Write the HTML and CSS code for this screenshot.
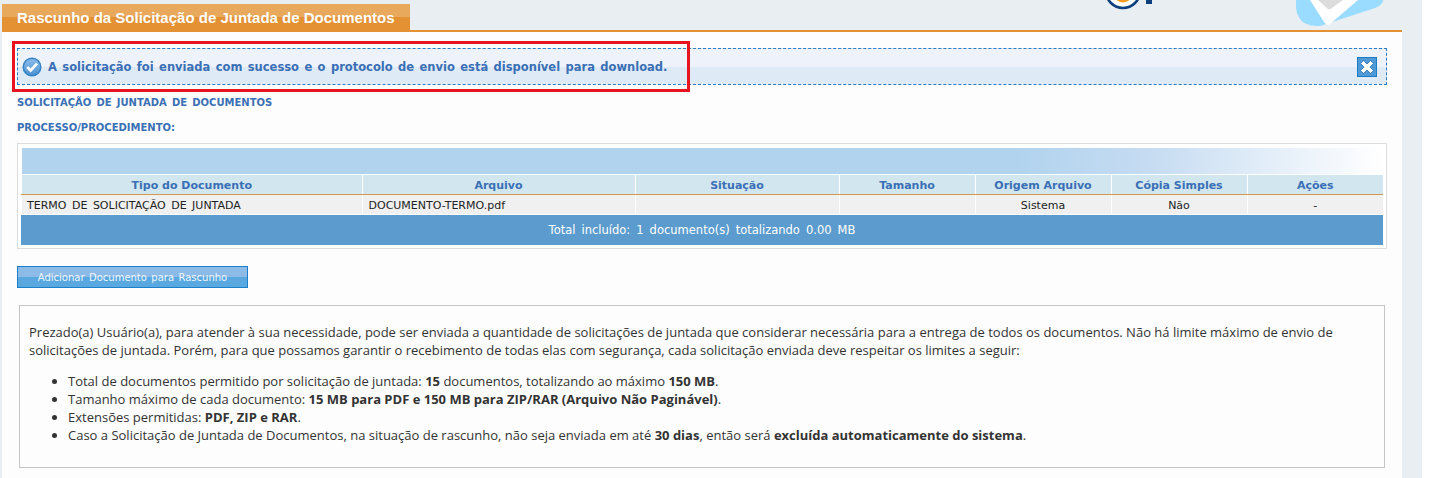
FILE: index.html
```html
<!DOCTYPE html>
<html lang="pt-BR">
<head>
  <meta charset="UTF-8">
  <title>Rascunho da Solicitação de Juntada de Documentos</title>
  <link rel="stylesheet" href="styles.css">
</head>
<body>
  <div class="page">
    <!-- cabecalho cortado no topo da captura -->
    <svg class="logo" width="60" height="12" viewBox="0 0 60 12">
      <circle cx="23" cy="-9" r="17" fill="#fff" stroke="#0d3f7f" stroke-width="2.6"/>
      <circle cx="23" cy="-7" r="9.5" fill="#f49a1f"/>
      <rect x="46" y="-2" width="6" height="6" fill="#0d3f7f"/>
    </svg>
    <svg class="seal" width="92" height="28" viewBox="0 0 92 28">
      <path d="M1 0 C1 6 1 10 2 13 C4 19 8 23 12 24 C16 26 21 26 25 26 L80 8 C85 6 88 3 88 0 Z" fill="#9adcff"/>
      <path d="M15 0 L29 22 Q32 26 35 24 L63 0 Z" fill="#fff"/>
      <path d="M23 0 L33 9 Q35 10 37 8 L48 0 Z" fill="#dcdcdc"/>
    </svg>

    <div class="title-bar">
      <h1 class="title-tab">Rascunho da Solicitação de Juntada de Documentos</h1>
    </div>

    <div class="panel">
      <div class="message">
        <svg class="msg-icon" width="20" height="20" viewBox="0 0 20 20">
          <defs>
            <linearGradient id="okfill" x1="0" y1="0" x2="0" y2="1">
              <stop offset="0" stop-color="#8dbdea"/>
              <stop offset="1" stop-color="#4a90d2"/>
            </linearGradient>
          </defs>
          <circle cx="10" cy="10" r="8.8" fill="url(#okfill)" stroke="#2f82c6" stroke-width="1.4"/>
          <path d="M5.2 10 L8.6 13.4 L15 6.6" fill="none" stroke="#fff" stroke-width="2.8"/>
        </svg>
        <span class="msg-text">A solicitação foi enviada com sucesso e o protocolo de envio está disponível para download.</span>
        <span class="msg-close">
          <svg width="18" height="18" viewBox="0 0 18 18">
            <path d="M5.5 2.5 L9 6 L12.5 2.5 L15.5 5.5 L12 9 L15.5 12.5 L12.5 15.5 L9 12 L5.5 15.5 L2.5 12.5 L6 9 L2.5 5.5 Z" fill="#fff" stroke="#1f6fb5" stroke-width="0.8" stroke-linejoin="round"/>
          </svg>
        </span>
      </div>

      <p class="section-label first">SOLICITAÇÃO DE JUNTADA DE DOCUMENTOS</p>
      <p class="section-label">PROCESSO/PROCEDIMENTO:</p>

      <div class="table-box">
        <div class="table-band"></div>
        <table class="doc-table">
          <colgroup>
            <col class="c1"><col class="c2"><col class="c3"><col class="c4"><col class="c5"><col class="c6"><col class="c7">
          </colgroup>
          <thead>
            <tr>
              <th>Tipo do Documento</th>
              <th>Arquivo</th>
              <th>Situação</th>
              <th>Tamanho</th>
              <th>Origem Arquivo</th>
              <th>Cópia Simples</th>
              <th>Ações</th>
            </tr>
          </thead>
          <tbody>
            <tr>
              <td>TERMO DE SOLICITAÇÃO DE JUNTADA</td>
              <td>DOCUMENTO-TERMO.pdf</td>
              <td></td>
              <td></td>
              <td class="center">Sistema</td>
              <td class="center">Não</td>
              <td class="center">-</td>
            </tr>
          </tbody>
        </table>
        <div class="table-total">Total incluído: 1 documento(s) totalizando 0.00 MB</div>
      </div>

      <button class="btn-add">Adicionar Documento para Rascunho</button>

      <div class="info-box">
        <p>Prezado(a) Usuário(a), para atender à sua necessidade, pode ser enviada a quantidade de solicitações de juntada que considerar necessária para a entrega de todos os documentos. Não há limite máximo de envio de solicitações de juntada. Porém, para que possamos garantir o recebimento de todas elas com segurança, cada solicitação enviada deve respeitar os limites a seguir:</p>
        <ul>
          <li>Total de documentos permitido por solicitação de juntada: <strong>15</strong> documentos, totalizando ao máximo <strong>150 MB</strong>.</li>
          <li>Tamanho máximo de cada documento: <strong>15 MB para PDF e 150 MB para ZIP/RAR (Arquivo Não Paginável)</strong>.</li>
          <li>Extensões permitidas: <strong>PDF, ZIP e RAR</strong>.</li>
          <li>Caso a Solicitação de Juntada de Documentos, na situação de rascunho, não seja enviada em até <strong>30 dias</strong>, então será <strong>excluída automaticamente do sistema</strong>.</li>
        </ul>
      </div>
    </div>

    <div class="annotation"></div>
  </div>
</body>
</html>
```

FILE: styles.css
```css
html, body {
  margin: 0;
  padding: 0;
  height: 478px;
  overflow: hidden;
  background: #fff;
}
.page {
  position: relative;
  width: 1422px;
  height: 478px;
  padding: 0 20px 0 2px;
  box-sizing: border-box;
  background: #e9eef3;
  font-family: "DejaVu Sans", Verdana, sans-serif;
}
.logo {
  position: absolute;
  left: 1100px;
  top: 0;
}
.seal {
  position: absolute;
  left: 1295px;
  top: 0;
}
.title-bar {
  height: 32px;
  padding-top: 4px;
  box-sizing: border-box;
  border-bottom: 2px solid #e39133;
}
.title-tab {
  width: 408px;
  height: 26px;
  margin: 0;
  padding-left: 15px;
  box-sizing: border-box;
  background: linear-gradient(#e8a95c 0, #e8a95c 13px, #e39133 13px);
  color: #fff;
  font: bold 15px/27px "Liberation Sans", Arial, sans-serif;
}
.panel {
  height: 446px;
  padding: 16px 15px 0;
  box-sizing: border-box;
  background: #fdfdfd;
}
.message {
  display: flex;
  align-items: center;
  height: 37px;
  padding: 0 9px 0 4px;
  box-sizing: border-box;
  border: 1px dashed #2b7bc4;
  background: linear-gradient(#edf2fb 0, #edf2fb 18px, #deeaf6 18px);
}
.msg-icon {
  flex: none;
  margin-right: 6px;
}
.msg-text {
  flex: 1;
  color: #3a6fb5;
  font-size: 11.5px;
  font-weight: bold;
  word-spacing: 1.4px;
}
.msg-close {
  display: flex;
  align-items: center;
  justify-content: center;
  width: 20px;
  height: 20px;
  border: 1px solid #1a7cc5;
  box-sizing: border-box;
  background: #4f9ad6;
}
.section-label {
  margin: 15px 0 0;
  color: #3a6fb5;
  font-size: 10px;
  font-weight: bold;
  line-height: 10px;
  word-spacing: 1.7px;
}
.section-label.first {
  margin-top: 13px;
}
.table-box {
  height: 106px;
  margin-top: 10px;
  padding: 4px 3px 3px;
  box-sizing: border-box;
  border: 1px solid #ddd;
  background: #fff;
}
.table-band {
  height: 26px;
  margin-left: 1px;
  background: linear-gradient(90deg, #b1d3ee 0, #b1d3ee 73%, #c6dcf2 83%, #fff 100%);
}
.doc-table {
  width: 1362px;
  border-collapse: collapse;
  table-layout: fixed;
  font-size: 11px;
  word-spacing: 2px;
}
.c1 { width: 341px; }
.c2 { width: 273px; }
.c3 { width: 204px; }
.c4 { width: 136px; }
.c5 { width: 136px; }
.c6 { width: 136px; }
.c7 { width: 136px; }
.doc-table th {
  height: 18px;
  padding: 1px 0 0;
  border-top: 1px solid #fff;
  border-left: 1px solid #fff;
  border-bottom: 1px solid #d39a4a;
  background: #d1e6ef;
  color: #3a6fb5;
  font-size: 11px;
  font-weight: bold;
  word-spacing: 0;
}
.doc-table th:first-child, .doc-table td:first-child {
  border-left: 0;
  box-shadow: inset 1px 0 #fff;
}
.doc-table th:first-child {
  padding-left: 1px;
}
.doc-table td {
  height: 18px;
  padding: 1px 0 0 6px;
  border-left: 1px solid #fff;
  border-bottom: 1px solid #fff;
  background: #f0f0f0;
  color: #222;
  font-size: 11px;
}
.doc-table td.center {
  padding: 1px 0 0;
  text-align: center;
}
.table-total {
  height: 30px;
  background: #5b9bcd;
  color: #fff;
  font-size: 11.5px;
  line-height: 30px;
  text-align: center;
  word-spacing: 2.4px;
}
.btn-add {
  display: block;
  width: 231px;
  height: 22px;
  margin-top: 17px;
  padding: 0;
  border: 1px solid #1a80cc;
  background: linear-gradient(#8bbbe6 0, #8bbbe6 10px, #5aa8e0 10px);
  color: #f0f6fc;
  font-family: "DejaVu Sans", Verdana, sans-serif;
  font-size: 10px;
  word-spacing: 1.25px;
  cursor: pointer;
}
.info-box {
  height: 163px;
  margin: 17px 2px 0;
  padding: 17px 9px 0;
  box-sizing: border-box;
  border: 1px solid #c4c4c4;
  color: #333;
  font-family: "Open Sans", sans-serif;
  font-size: 13px;
  line-height: 18px;
}
.info-box p {
  margin: 0 0 13px;
}
.info-box ul {
  margin: 0;
  padding-left: 39px;
}
.annotation {
  position: absolute;
  left: 12px;
  top: 41px;
  width: 678px;
  height: 51px;
  box-sizing: border-box;
  border: 3px solid #e8141f;
}
```
